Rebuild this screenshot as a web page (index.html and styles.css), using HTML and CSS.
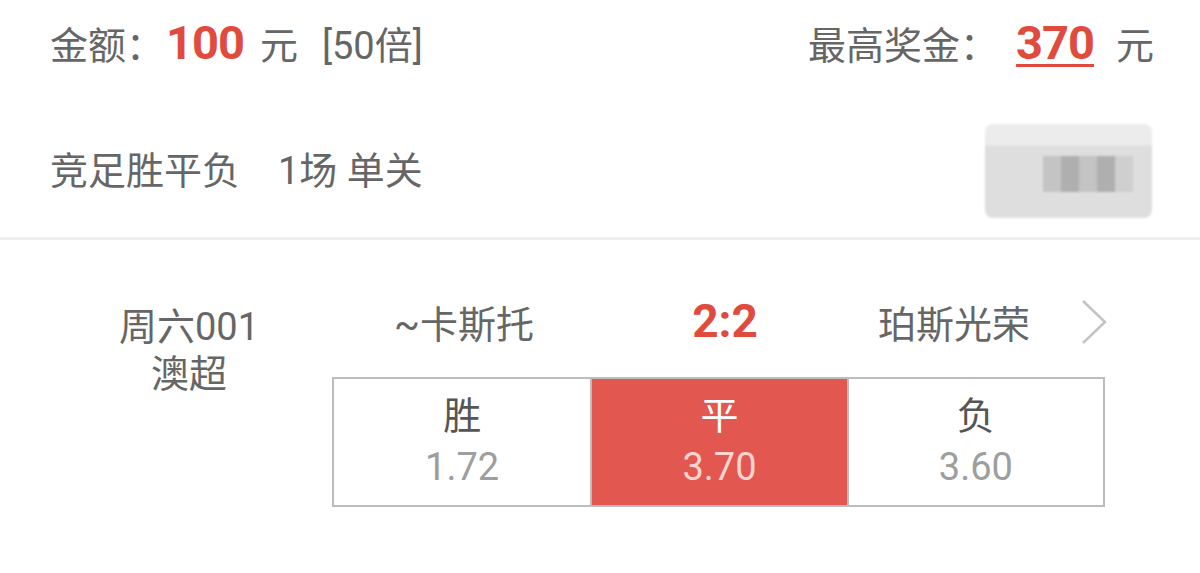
FILE: index.html
```html
<!DOCTYPE html>
<html lang="zh-CN">
<head>
  <meta charset="UTF-8" />
  <meta name="viewport" content="width=device-width, initial-scale=1" />
  <title>投注详情</title>
  <link rel="stylesheet" href="styles.css">
</head>
<body>

  <div class="summary">
    <div class="amount">
      金额：<span class="num">100</span><span class="unit">元</span><span class="times">[50倍]</span>
    </div>
    <div class="prize">
      最高奖金：<span class="num prize-num">370</span><span class="unit">元</span>
    </div>
  </div>

  <div class="play">
    <div class="play-name">竞足胜平负<span class="pass">1场 单关</span></div>
    <div class="masked">
      <div class="mosaic">
        <i class="m1"></i><i class="m2"></i><i class="m1"></i><i class="m2"></i><i class="m3"></i>
        <i class="m1"></i><i class="m2"></i><i class="m1"></i><i class="m2"></i><i class="m3"></i>
      </div>
    </div>
  </div>

  <div class="match">
    <div class="match-info">
      <div>周六001</div>
      <div>澳超</div>
    </div>
    <div class="match-body">
      <div class="teams">
        <span class="team">~卡斯托</span>
        <span class="score">2:2</span>
        <span class="team">珀斯光荣</span>
        <svg class="chevron" width="28" height="46" viewBox="0 0 28 46">
          <path d="M3 2 L25 23 L3 44" fill="none" stroke="#c4c4c4" stroke-width="2.5" />
        </svg>
      </div>
      <div class="odds">
        <div class="cell"><span class="label">胜</span><span class="odd">1.72</span></div>
        <div class="cell selected"><span class="label">平</span><span class="odd">3.70</span></div>
        <div class="cell"><span class="label">负</span><span class="odd">3.60</span></div>
      </div>
    </div>
  </div>

</body>
</html>
```

FILE: styles.css
```css
body {
  margin: 0;
  background: #fff;
  font-family: Roboto, "Noto Sans CJK SC", sans-serif;
  color: #666;
  font-size: 38px;
}
.summary {
  display: flex;
  justify-content: space-between;
  align-items: center;
  height: 84px;
  padding: 0 46px 0 50px;
}
.num {
  font-weight: 700;
  font-size: 47px;
  color: #e04b3e;
  letter-spacing: -1px;
}
.amount .num {
  margin-left: 2px;
}
.unit {
  margin-left: 16px;
}
.times {
  margin-left: 24px;
}
.prize-num {
  margin-left: 18px;
  text-decoration: underline;
  text-decoration-thickness: 3px;
  text-underline-offset: 5px;
}
.prize .unit {
  margin-left: 22px;
}
.play {
  display: flex;
  justify-content: space-between;
  align-items: center;
  height: 156px;
  padding: 14px 48px 0 50px;
  box-sizing: border-box;
  border-bottom: 3px solid #eeeeee;
}
.pass {
  margin-left: 38px;
}
.masked {
  width: 167px;
  height: 94px;
  border-radius: 8px;
  background: linear-gradient(to bottom, #ececec 0, #ececec 22%, #dedede 24%, #dedede 100%);
  display: flex;
  align-items: center;
  justify-content: center;
  filter: blur(1px);
  margin-top: 6px;
}
.mosaic {
  display: grid;
  grid-template-columns: repeat(5, 18px);
  grid-template-rows: repeat(2, 18px);
  margin-left: 38px;
  margin-top: 6px;
}
.mosaic i { display: block; }
.m1 { background: #c4c4c4; }
.m2 { background: #afafaf; }
.m3 { background: #cfcfcf; }
.match {
  display: flex;
  padding-top: 49px;
}
.match-info {
  width: 332px;
  padding-left: 46px;
  padding-top: 15px;
  text-align: center;
  line-height: 47px;
  box-sizing: border-box;
  flex: none;
}
.match-body {
  width: 773px;
}
.teams {
  display: grid;
  grid-template-columns: 264px 258px 200px 1fr;
  align-items: center;
  height: 64px;
  margin-bottom: 24px;
}
.team {
  text-align: center;
}
.score {
  text-align: center;
  font-weight: 700;
  font-size: 46px;
  color: #e04b3e;
}
.chevron {
  justify-self: end;
  margin-right: -3px;
  margin-top: 2px;
}
.odds {
  display: grid;
  grid-template-columns: repeat(3, 1fr);
  border: 2px solid #bdbdbd;
  height: 130px;
  box-sizing: border-box;
}
.cell {
  display: flex;
  flex-direction: column;
  align-items: center;
  justify-content: center;
  border-left: 2px solid #bdbdbd;
  line-height: 51px;
}
.cell:first-child {
  border-left: none;
}
.label {
  color: #555;
}
.odd {
  color: #9e9e9e;
}
.selected {
  background: #e35751;
}
.selected .label {
  color: #fff;
}
.selected .odd {
  color: #fbd3cf;
}
```
